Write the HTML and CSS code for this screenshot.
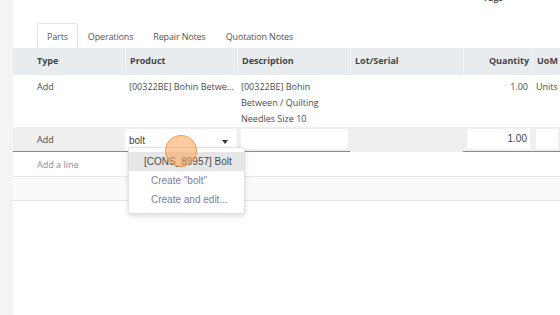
FILE: index.html
```html
<!DOCTYPE html>
<html lang="en">
<head>
  <meta charset="UTF-8">
  <title>Repair Order - Parts</title>
  <link rel="stylesheet" href="styles.css">
</head>
<body>
  <div class="sidebar"></div>

  <div class="sheet">
    <div class="top">
      <span class="top__label">Tags</span>
    </div>

    <!-- Notebook tabs -->
    <ul class="tabs">
      <li class="tab tab--active">Parts</li>
      <li class="tab">Operations</li>
      <li class="tab">Repair Notes</li>
      <li class="tab">Quotation Notes</li>
    </ul>

    <!-- Parts list -->
    <div class="list">
      <div class="row row--head">
        <div class="cell cell--first">Type</div>
        <div class="cell cell--sep">Product</div>
        <div class="cell cell--sep">Description</div>
        <div class="cell cell--sep">Lot/Serial</div>
        <div class="cell cell--sep cell--num">Quantity</div>
        <div class="cell cell--sep">UoM</div>
      </div>

      <div class="row row--line">
        <div class="cell cell--first">Add</div>
        <div class="cell cell--clip">[00322BE] Bohin Betwe...</div>
        <div class="cell">[00322BE] Bohin<br>Between / Quilting<br>Needles Size 10</div>
        <div class="cell"></div>
        <div class="cell cell--num">1.00</div>
        <div class="cell">Units</div>
      </div>

      <div class="row row--edit">
        <div class="cell cell--first cell--line cell--type">Add</div>
        <div class="cell cell--field cell--line cell--product">
          <div class="input input--select">bolt<span class="caret"></span></div>
          <ul class="dropdown">
            <li class="dropdown__item dropdown__item--active">[CONS_89957] Bolt</li>
            <li class="dropdown__item">Create "bolt"</li>
            <li class="dropdown__item">Create and edit...</li>
          </ul>
        </div>
        <div class="cell cell--field cell--line"><div class="input"></div></div>
        <div class="cell"></div>
        <div class="cell cell--field cell--line"><div class="input input--num">1.00</div></div>
        <div class="cell cell--field cell--line"><div class="input"></div></div>
      </div>

      <div class="row row--add">
        <div class="cell cell--first cell--link">Add a line</div>
      </div>

      <div class="row row--blank"></div>
    </div>

    <!-- click marker -->
    <div class="click-dot"></div>
  </div>
</body>
</html>
```

FILE: styles.css
```css
* {
  margin: 0;
  padding: 0;
  box-sizing: border-box;
}

body {
  display: flex;
  height: 315px;
  overflow: hidden;
  font-family: "Open Sans", "Noto Sans", sans-serif;
  font-size: 9px;
  color: #4c4c4c;
  background-color: #fff;
}

.sidebar {
  width: 13px;
  flex-shrink: 0;
  background-color: #f3f4f6;
}

.sheet {
  position: relative;
  flex: 1;
  min-width: 0;
}

/* Top field label, cut by the viewport */
.top {
  display: flex;
  justify-content: flex-end;
  height: 23px;
  padding-right: 57px;
}

.top__label {
  margin-top: -9px;
  font-weight: 700;
  font-size: 9px;
  color: #555;
}

/* Tabs */
.tabs {
  display: flex;
  list-style: none;
  padding-left: 24px;
}

.tab {
  height: 25px;
  line-height: 25px;
  padding: 0 9px;
  border: 1px solid transparent;
  border-bottom: none;
  letter-spacing: -0.15px;
  color: #555;
}

.tab--active {
  border-color: #dee2e6;
  border-radius: 3px 3px 0 0;
  background-color: #fff;
}

/* List */
.row {
  display: grid;
  grid-template-columns: 112px 112px 113px 113px 69px 1fr;
}

.cell {
  padding: 4px 4px 0;
  line-height: 16px;
  min-width: 0;
}

.cell--first {
  padding-left: 24px;
}

.cell--num {
  text-align: right;
}

.cell--clip {
  white-space: nowrap;
  overflow: hidden;
}

.row--head {
  height: 27px;
  background-color: #e9ecef;
  font-weight: 700;
  color: #444;
}

.row--head .cell {
  padding-top: 5px;
}

.cell--sep {
  border-left: 1px solid #f1f3f5;
}

.row--head .cell--num {
  padding-right: 3px;
}

.row--line {
  height: 52px;
}

/* Editable row */
.row--edit {
  height: 25px;
  background-color: #efefef;
}

.cell--line {
  border-bottom: 1px solid #8884ad;
}

.cell--type {
  padding-top: 5px;
}

.cell--field {
  padding: 2px 2px 0 4px;
}

.cell--product {
  position: relative;
  padding: 0;
}

.input {
  height: 20px;
  padding: 0 4px;
  background-color: #fff;
  font-family: "Liberation Sans", Arial, sans-serif;
  font-size: 10px;
  line-height: 20px;
  color: #444;
}

.input--select {
  display: flex;
  align-items: center;
  justify-content: space-between;
  height: 22px;
  margin-top: 2px;
  padding-top: 1px;
  padding-right: 9px;
}

.input--num {
  text-align: right;
  padding-right: 3px;
}

.caret {
  width: 0;
  height: 0;
  border-left: 3.5px solid transparent;
  border-right: 3.5px solid transparent;
  border-top: 4px solid #333;
  margin-top: 2px;
}

/* Autocomplete dropdown */
.dropdown {
  position: absolute;
  top: 20px;
  left: 3px;
  width: 117px;
  padding: 4px 0;
  list-style: none;
  background-color: #fff;
  border: 1px solid #e2e2e2;
  border-radius: 2px;
  box-shadow: 0 2px 5px rgba(0, 0, 0, 0.15);
  font-family: "Liberation Sans", Arial, sans-serif;
  font-size: 10px;
  z-index: 10;
}

.dropdown__item {
  height: 19px;
  line-height: 19px;
  padding-left: 22px;
  white-space: nowrap;
  color: #7f7ca3;
}

.dropdown__item--active {
  padding-left: 15px;
  background-color: #e6e6e6;
  color: #4a4a4a;
}

/* Add a line + filler */
.row--add {
  height: 25px;
  border-bottom: 1px solid #e6e6e6;
}

.row--add .cell {
  padding-top: 5px;
  white-space: nowrap;
}

.cell--link {
  color: #8a87a8;
}

.row--blank {
  height: 24px;
  background-color: #fafafa;
  border-bottom: 1px solid #e2e2e2;
}

/* Click indicator */
.click-dot {
  position: absolute;
  left: 152px;
  top: 135px;
  width: 32px;
  height: 32px;
  border-radius: 50%;
  background-color: rgba(250, 160, 80, 0.55);
  border: 1px solid rgba(240, 140, 60, 0.7);
  z-index: 20;
}
```
